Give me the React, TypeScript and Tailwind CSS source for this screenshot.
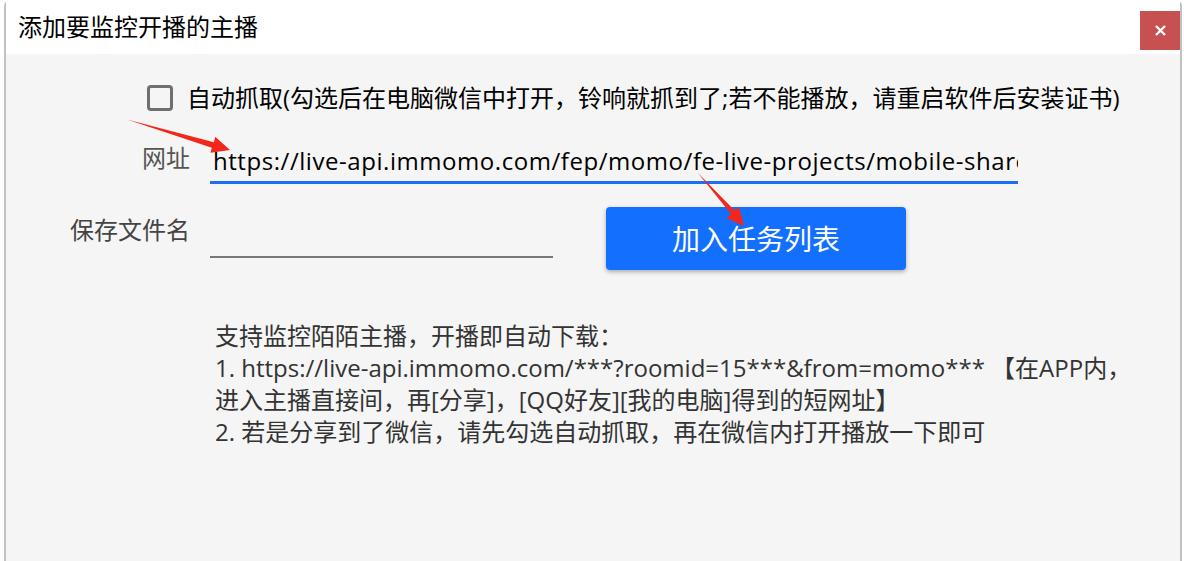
import { useState } from 'react';

const FONT = "font-['Open_Sans','Noto_Sans_CJK_SC',sans-serif]";

function RedArrow({ points }: { points: string }) {
  return <polygon points={points} fill="#f2261b" />;
}

export default function App() {
  const [autoGrab, setAutoGrab] = useState(false);
  const [url, setUrl] = useState(
    'https://live-api.immomo.com/fep/momo/fe-live-projects/mobile-share/index.html'
  );
  const [fileName, setFileName] = useState('');

  return (
    <div className={`w-[1184px] h-[561px] bg-white overflow-hidden ${FONT}`}>
      <div className="relative ml-[4px] w-[1178px] h-[561px] border-x-2 border-[#c2c2c2] rounded-t-[6px] bg-[#f5f5f5] flex flex-col">
        {/* Title bar */}
        <div className="h-[54px] bg-white flex items-center justify-between shrink-0">
          <span className="pl-[12px] text-[24px] leading-none text-black">添加要监控开播的主播</span>
          <button className="mt-[6px] w-[40px] h-[39px] bg-[#c75050] flex items-center justify-center">
            <svg width="11" height="11" viewBox="0 0 11 11">
              <path d="M1 1 L10 10 M10 1 L1 10" stroke="white" strokeWidth="2.4" />
            </svg>
          </button>
        </div>

        {/* Auto grab checkbox */}
        <label className="mt-[28px] h-[32px] ml-[141px] flex items-center gap-[14px] cursor-pointer">
          <span
            onClick={() => setAutoGrab(!autoGrab)}
            className="w-[26px] h-[26px] border-[3px] border-[#6f6f6f] rounded-[4px] bg-[#f5f5f5] flex items-center justify-center"
          >
            {autoGrab && <span className="w-[12px] h-[12px] bg-[#6f6f6f]" />}
          </span>
          <span className="text-[24px] leading-none text-black whitespace-nowrap">
            自动抓取(勾选后在电脑微信中打开，铃响就抓到了;若不能播放，请重启软件后安装证书)
          </span>
        </label>

        {/* URL row */}
        <div className="mt-[24px] flex items-start">
          <div className="w-[184px] h-[40px] leading-[40px] text-right text-[24px] text-[#555]">网址</div>
          <input
            value={url}
            onChange={(e) => setUrl(e.target.value)}
            className="ml-[20px] w-[808px] h-[46px] pl-[3px] pt-[2px] bg-transparent border-b-[3px] border-[#1a6ff5] outline-none text-[24px] tracking-[0.55px] text-black"
          />
        </div>

        {/* File name row + button */}
        <div className="mt-[23px] flex items-start">
          <div className="w-[184px] h-[46px] leading-[46px] text-right text-[24px] text-[#444]">保存文件名</div>
          <input
            value={fileName}
            onChange={(e) => setFileName(e.target.value)}
            className="ml-[20px] w-[343px] h-[51px] bg-transparent border-b-2 border-[#777] outline-none text-[24px] text-black"
          />
          <button className="ml-[53px] w-[300px] h-[63px] rounded-[4px] bg-[#1370fe] text-white text-[28px] shadow-[0_2px_4px_rgba(0,0,0,0.3)]">
            加入任务列表
          </button>
        </div>

        {/* Help text */}
        <div className="mt-[50px] ml-[209px] text-[24px] leading-[32px] text-[#333] whitespace-nowrap">
          <div>支持监控陌陌主播，开播即自动下载：</div>
          <div>1. https://live-api.immomo.com/***?roomid=15***&amp;from=momo*** 【在APP内，</div>
          <div>进入主播直接间，再[分享]，[QQ好友][我的电脑]得到的短网址】</div>
          <div>2. 若是分享到了微信，请先勾选自动抓取，再在微信内打开播放一下即可</div>
        </div>

        {/* Annotation arrows */}
        <svg className="absolute left-[-4px] top-0 pointer-events-none" width="1184" height="561">
          <RedArrow points="125,119.5 211.9,142.2 213.2,136.8 228,150 208.5,152.7 209.8,147.8" />
          <RedArrow points="695.5,172.5 731.8,209.8 737.1,207.8 742,226 724.9,218.2 728.8,213.7" />
        </svg>
      </div>
    </div>
  );
}
